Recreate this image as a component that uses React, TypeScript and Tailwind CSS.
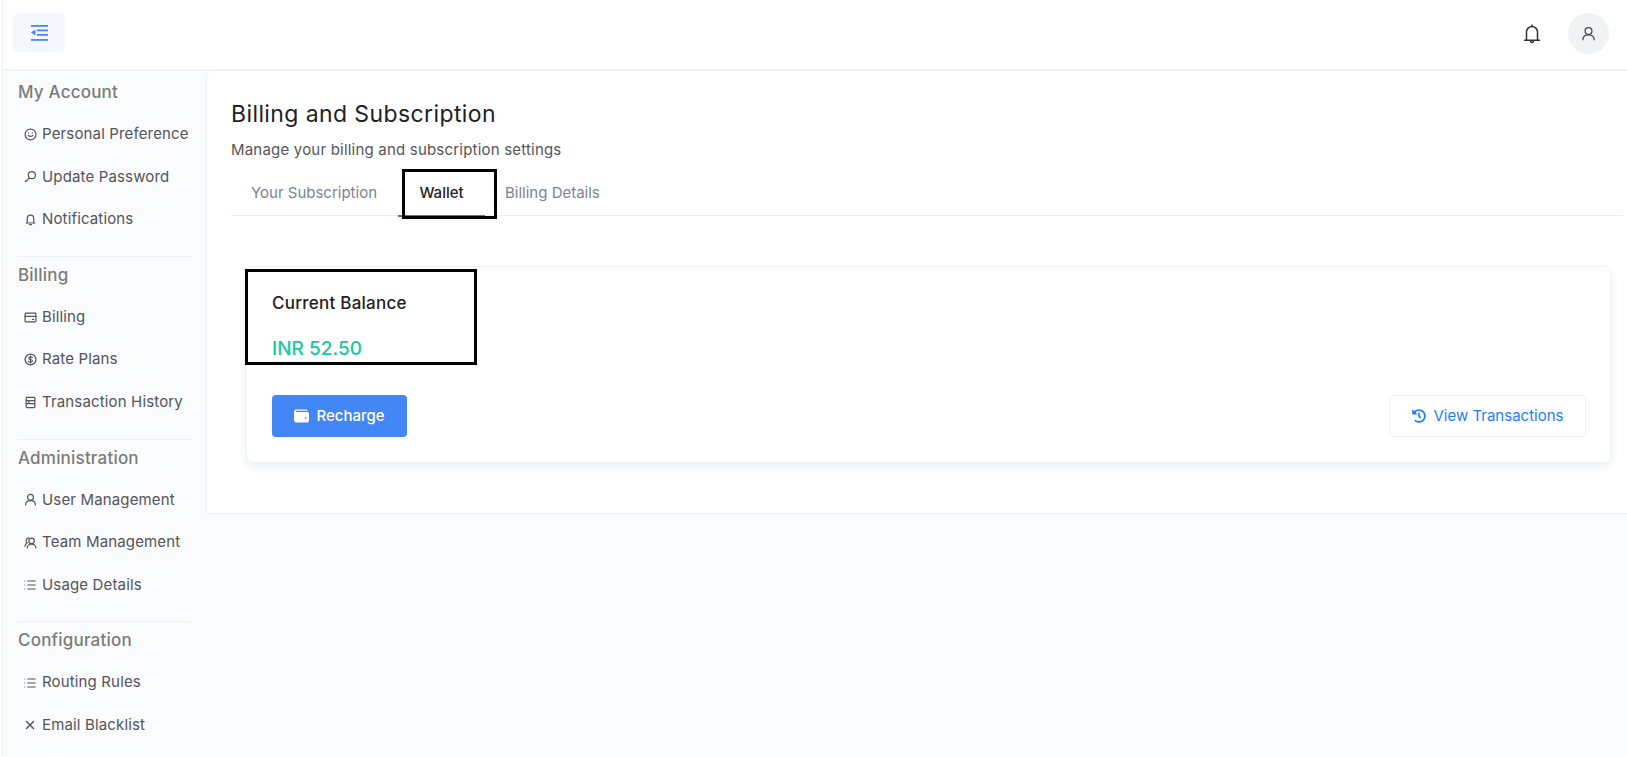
import React from "react";
import { List, X } from "lucide-react";
import { FaHistory } from "react-icons/fa";

const S = ({ children }: { children: React.ReactNode }) => (
  <svg width="13" height="13" viewBox="0 0 24 24" fill="none" stroke="currentColor" strokeWidth="2.2" strokeLinecap="round" strokeLinejoin="round">{children}</svg>
);
const Smile = () => <S><circle cx="12" cy="12" r="10" /><path d="M7.5 13.5c1 2.5 8 2.500 9 0" /><path d="M8.500 9h.01M15.500 9h.01" /></S>;
const Key = () => <S><circle cx="14.500" cy="9.500" r="6.500" /><path d="M10 14.500 3.500 21" /><path d="M3.500 21l-1-1" /></S>;
const BellI = () => <S><path d="M6 18V10a6 6 0 0 1 12 0v8" /><path d="M4 18.500h16" /><path d="M10 21.500h4" /></S>;
const Card = () => <S><rect x="2" y="4" width="20" height="16" rx="1.500" /><path d="M2 10h20" /><path d="M15.500 15.500h2.500" /></S>;
const Dollar = () => (
  <svg width="13" height="13" viewBox="0 0 24 24" fill="none" stroke="currentColor" strokeWidth="2.400" strokeLinecap="round">
    <circle cx="12" cy="12" r="10" />
    <path d="M15.500 8.500c-.7-1-1.900-1.400-3.500-1.400-2 0-3.400 1-3.400 2.400 0 3.500 7 1.500 7 5 0 1.500-1.500 2.400-3.600 2.400-1.700 0-3-.6-3.700-1.700" strokeWidth="2" />
    <path d="M12 5.500v13" strokeWidth="2" />
  </svg>
);
const Doc = () => <S><rect x="4" y="2.500" width="16" height="19" rx="1.500" /><path d="M4 8.500h16M4 14h16M9 8.500v5.500" /></S>;
const User = () => <S><circle cx="12" cy="8" r="5.500" /><path d="M3 22c0-5 4-8 9-8s9 3 9 8" /></S>;
const Team = () => <S><circle cx="14" cy="9" r="5" /><path d="M6 22c0-4 3.500-7 8-7s8 3 8 7" /><path d="M8.500 3.500A5 5 0 0 0 6 12.500" /><path d="M2 19c0-2.500 1-4.500 3-5.500" /></S>;
const ListI = () => <List size={14} strokeWidth={1.800} />;
const XI = () => <X size={14} strokeWidth={2.400} />;

const groups: { title: string; items: [React.ReactNode, string][] }[] = [
  { title: "My Account", items: [[<Smile />, "Personal Preference"], [<Key />, "Update Password"], [<BellI />, "Notifications"]] },
  { title: "Billing", items: [[<Card />, "Billing"], [<Dollar />, "Rate Plans"], [<Doc />, "Transaction History"]] },
  { title: "Administration", items: [[<User />, "User Management"], [<Team />, "Team Management"], [<ListI />, "Usage Details"]] },
  { title: "Configuration", items: [[<ListI />, "Routing Rules"], [<XI />, "Email Blacklist"]] },
];

export default function App() {
  return (
    <div
      className="h-screen overflow-hidden ml-[2px] border-l border-[#eaf0f7] bg-[#fafbfd] flex flex-col"
      style={{ fontFamily: "Inter, 'Open Sans', sans-serif" }}
    >
      <header className="h-[71px] shrink-0 bg-white border-b-2 border-[#eef1f6] flex items-start justify-between pt-[13px] pl-[10px] pr-[18px]">
        <button className="w-[52px] h-[39px] rounded-md bg-[#f4f7ff] flex items-center justify-center text-[#4a86f7]">
          <svg width="17" height="16" viewBox="0 0 17 16" fill="currentColor">
            <rect x="0" y="0" width="17" height="1.800" />
            <rect x="6" y="4.500" width="11" height="1.800" />
            <rect x="6" y="9" width="11" height="1.800" />
            <rect x="0" y="14" width="17" height="1.800" />
            <path d="M4.500 4.500v6L0 7.500z" />
          </svg>
        </button>
        <div className="flex items-center gap-[27px]">
          <svg width="18" height="20" viewBox="0 0 18 20" fill="none" stroke="#333" strokeWidth="1.500" strokeLinecap="round" strokeLinejoin="round">
            <path d="M3.500 16V8a5.500 5.500 0 0 1 11 0v8" />
            <path d="M1.500 16.200h15" />
            <path d="M9 2.500V1" />
            <path d="M7.500 17a1.500 1.500 0 0 0 3 0" />
          </svg>
          <div className="w-[41px] h-[41px] rounded-full bg-[#f1f2f4] flex items-center justify-center text-[#444]">
            <svg width="15" height="15" viewBox="0 0 24 24" fill="none" stroke="currentColor" strokeWidth="2" strokeLinecap="round"><circle cx="12" cy="8" r="5.500" /><path d="M3 22c0-5 4-8 9-8s9 3 9 8" /></svg>
          </div>
        </div>
      </header>
      <div className="flex flex-1 min-h-0">
        <aside className="w-[203px] shrink-0 px-[15px] pt-[7px]">
          {groups.map((g, i) => (
            <section key={g.title} className={i > 0 ? "border-t border-[#edeff3] mt-[15.300px] pt-[4px]" : ""}>
              <h3 className="text-[17px] leading-[28px] font-medium text-[#7b7b7b] tracking-[0.2px]">{g.title}</h3>
              <ul className="mt-[7px]">
                {g.items.map(([icon, label]) => (
                  <li key={label} className="h-[42.500px] flex items-center gap-[5px] pl-[5px] whitespace-nowrap text-[15px] text-[#54545a] tracking-[0.15px]">
                    <span className="w-[14px] flex justify-center shrink-0">{icon}</span>
                    {label}
                  </li>
                ))}
              </ul>
            </section>
          ))}
        </aside>
        <main className="flex-1 self-start h-[443px] bg-white border-l border-b border-[#eef1f6] rounded-tl-md pl-[24px] pr-[4px] pt-[29px]">
          <h1 className="text-[23px] leading-[28px] text-[#222] tracking-[0.4px]">Billing and Subscription</h1>
          <p className="mt-[11px] text-[15px] leading-[22px] text-[#55555c] tracking-[0.2px]">Manage your billing and subscription settings</p>
          <div className="relative flex h-[44px] mt-[11px] border-b border-[#e8eef6] text-[15px] text-[#7c8296]">
            <div className="w-[167px] pl-[20px] flex items-center">Your Subscription</div>
            <div className="relative w-[87px] flex items-center justify-center text-[#222] font-medium border-b-2 border-[#3b78e7] h-[45px]">Wallet</div>
            <div className="pl-[20px] flex items-center">Billing Details</div>
            <div className="absolute left-[171px] top-[-3px] w-[95px] h-[50px] border-[3px] border-black" />
          </div>
          <div className="relative mt-[50px] ml-[15px] mr-[12px] h-[197px] bg-white border border-[#f0f2f6] rounded-md shadow-[0_4px_10px_rgba(30,50,90,0.08)] pl-[25px] pr-[24px] pt-[24px]">
            <div className="text-[17px] leading-[24px] font-medium text-[#222] tracking-[0.25px]">Current Balance</div>
            <div className="mt-[20px] text-[19px] leading-[28px] font-medium text-[#13c9a1]">INR 52.50</div>
            <div className="absolute left-[-2px] top-[2px] w-[232px] h-[96px] border-[3px] border-black" />
            <div className="mt-[32px] flex justify-between items-center">
              <button className="w-[135px] h-[42px] rounded bg-[#4287f5] text-white text-[15px] font-medium flex items-center justify-center gap-[7px]">
                <svg width="15" height="14" viewBox="0 0 16 14" fill="currentColor"><path fillRule="evenodd" d="M2.500 0H13a1.500 1.500 0 0 1 1.500 1.500H2.500a.700.700 0 0 0 0 1.300H14A2 2 0 0 1 16 4.800V12a2 2 0 0 1-2 2H2.500A2.500 2.500 0 0 1 0 11.500v-9A2.500 2.500 0 0 1 2.500 0zM12.500 8a.900.900 0 1 0 0 1.800.900.900 0 0 0 0-1.800z" /></svg>
                Recharge
              </button>
              <button className="w-[197px] h-[42px] rounded border border-[#edf0f6] bg-white text-[#1f7cff] text-[15px] flex items-center justify-center gap-[8px]">
                <FaHistory size={14} />
                View Transactions
              </button>
            </div>
          </div>
        </main>
      </div>
    </div>
  );
}
